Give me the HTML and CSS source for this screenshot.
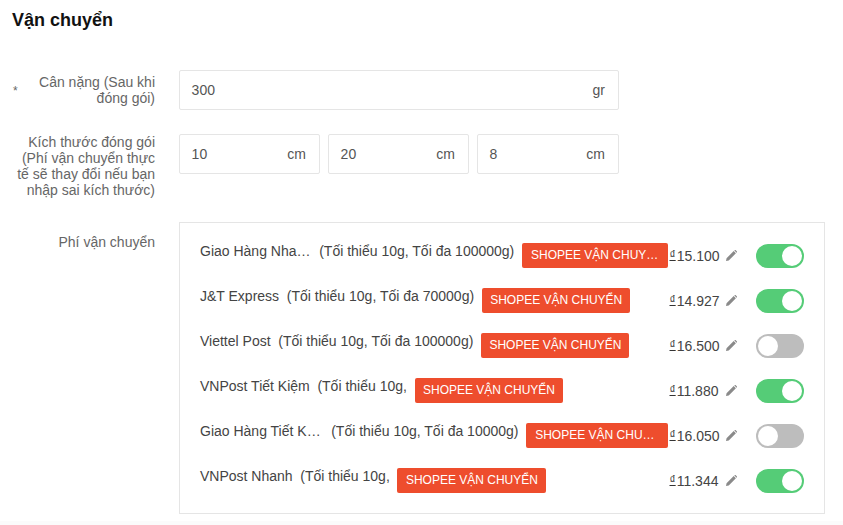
FILE: index.html
```html
<!DOCTYPE html>
<html lang="vi">
<head>
<meta charset="utf-8">
<title>Vận chuyển</title>
<link rel="stylesheet" href="styles.css">
</head>
<body>
<section class="card">
  <h2 class="title">Vận chuyển</h2>
  <div class="form-row form-row--weight">
    <span class="required">*</span>
    <label class="label label--center">Cân nặng (Sau khi đóng gói)</label>
    <div class="fields">
      <div class="input"><span>300</span><span>gr</span></div>
    </div>
  </div>
  <div class="form-row">
    <label class="label">Kích thước đóng gói (Phí vận chuyển thực tế sẽ thay đổi nếu bạn nhập sai kích thước)</label>
    <div class="fields fields--dims">
      <div class="input"><span>10</span><span>cm</span></div>
      <div class="input"><span>20</span><span>cm</span></div>
      <div class="input"><span>8</span><span>cm</span></div>
    </div>
  </div>
  <div class="form-row form-row--last">
    <label class="label label--fee">Phí vận chuyển</label>
    <div class="panel">
      <div class="ship">
        <div class="ship-info"><span class="name name--a">Giao Hàng Nhanh</span><span class="limit">(Tối thiểu 10g, Tối đa 100000g)</span><span class="tag tag--cut">SHOPEE VẬN CHUYỂN</span></div>
        <div class="ship-side"><span class="price"><span class="cur">₫</span>15.100</span><svg class="pencil" viewBox="0 0 12 12"><path d="M0 12l.6-3L8.4 1.2l2.4 2.4L3 11.4zM9.1.5l.5-.5q.4-.3.8 0l1.6 1.6q.3.4 0 .8l-.5.5z"/></svg><span class="switch switch--on"></span></div>
      </div>
      <div class="ship">
        <div class="ship-info"><span class="name">J&amp;T Express</span><span class="limit">(Tối thiểu 10g, Tối đa 70000g)</span><span class="tag">SHOPEE VẬN CHUYỂN</span></div>
        <div class="ship-side"><span class="price"><span class="cur">₫</span>14.927</span><svg class="pencil" viewBox="0 0 12 12"><path d="M0 12l.6-3L8.4 1.2l2.4 2.4L3 11.4zM9.1.5l.5-.5q.4-.3.8 0l1.6 1.6q.3.4 0 .8l-.5.5z"/></svg><span class="switch switch--on"></span></div>
      </div>
      <div class="ship">
        <div class="ship-info"><span class="name">Viettel Post</span><span class="limit">(Tối thiểu 10g, Tối đa 100000g)</span><span class="tag">SHOPEE VẬN CHUYỂN</span></div>
        <div class="ship-side"><span class="price"><span class="cur">₫</span>16.500</span><svg class="pencil" viewBox="0 0 12 12"><path d="M0 12l.6-3L8.4 1.2l2.4 2.4L3 11.4zM9.1.5l.5-.5q.4-.3.8 0l1.6 1.6q.3.4 0 .8l-.5.5z"/></svg><span class="switch"></span></div>
      </div>
      <div class="ship">
        <div class="ship-info"><span class="name">VNPost Tiết Kiệm</span><span class="limit">(Tối thiểu 10g,</span><span class="tag">SHOPEE VẬN CHUYỂN</span></div>
        <div class="ship-side"><span class="price"><span class="cur">₫</span>11.880</span><svg class="pencil" viewBox="0 0 12 12"><path d="M0 12l.6-3L8.4 1.2l2.4 2.4L3 11.4zM9.1.5l.5-.5q.4-.3.8 0l1.6 1.6q.3.4 0 .8l-.5.5z"/></svg><span class="switch switch--on"></span></div>
      </div>
      <div class="ship">
        <div class="ship-info"><span class="name name--b">Giao Hàng Tiết Kiệm</span><span class="limit">(Tối thiểu 10g, Tối đa 10000g)</span><span class="tag tag--cut">SHOPEE VẬN CHUYỂN</span></div>
        <div class="ship-side"><span class="price"><span class="cur">₫</span>16.050</span><svg class="pencil" viewBox="0 0 12 12"><path d="M0 12l.6-3L8.4 1.2l2.4 2.4L3 11.4zM9.1.5l.5-.5q.4-.3.8 0l1.6 1.6q.3.4 0 .8l-.5.5z"/></svg><span class="switch"></span></div>
      </div>
      <div class="ship">
        <div class="ship-info"><span class="name">VNPost Nhanh</span><span class="limit">(Tối thiểu 10g,</span><span class="tag">SHOPEE VẬN CHUYỂN</span></div>
        <div class="ship-side"><span class="price"><span class="cur">₫</span>11.344</span><svg class="pencil" viewBox="0 0 12 12"><path d="M0 12l.6-3L8.4 1.2l2.4 2.4L3 11.4zM9.1.5l.5-.5q.4-.3.8 0l1.6 1.6q.3.4 0 .8l-.5.5z"/></svg><span class="switch switch--on"></span></div>
      </div>
    </div>
  </div>
</section>
</body>
</html>
```
FILE: styles.css
```css
* { box-sizing: border-box; }
html, body { margin: 0; padding: 0; }
body {
  width: 843px;
  height: 525px;
  overflow: hidden;
  background: #fbfbfb;
  font-family: "Liberation Sans", Arial, sans-serif;
  font-size: 14px;
  color: #555;
}
.card {
  background: #fff;
  height: 521px;
  padding: 10px 18px 0 12px;
}
.title {
  margin: 0 0 39px;
  font-size: 18px;
  line-height: 21px;
  font-weight: 700;
  color: #111;
}
.form-row {
  position: relative;
  display: flex;
  gap: 24px;
  margin-bottom: 24px;
}
.form-row--last { margin-bottom: 0; }
.required {
  position: absolute;
  left: 1px;
  top: 13px;
  font-size: 12px;
  line-height: 16px;
  color: #666;
}
.label {
  flex: none;
  width: 143px;
  line-height: 16px;
  text-align: right;
  color: #666;
}
.label--center { padding: 4px 0 0 20px; }
.label--fee { padding-top: 12px; }
.fields {
  display: grid;
  grid-template-columns: 440px;
  gap: 8px;
}
.fields--dims { grid-template-columns: 141px 141px 142px; }
.input {
  height: 40px;
  padding: 0 13px 0 11.6px;
  display: flex;
  align-items: center;
  justify-content: space-between;
  background: #fff;
  border: 1px solid #e5e5e5;
  border-radius: 2px;
  color: #555;
}
.panel {
  width: 646px;
  height: 292px;
  padding: 20px;
  display: flex;
  flex-direction: column;
  gap: 20px;
  border: 1px solid #e5e5e5;
}
.ship {
  display: flex;
  height: 25px;
}
.ship-info {
  flex: 1;
  min-width: 0;
  display: flex;
  gap: 7.7px;
  align-items: flex-start;
  line-height: 16px;
  color: #444;
  white-space: nowrap;
}
.name { flex: none; }
.name--a, .name--b {
  overflow: hidden;
  text-overflow: ellipsis;
}
.name--a { width: 111.5px; }
.name--b { width: 123.5px; }
.limit { flex: none; }
.tag {
  flex: 0 1 auto;
  min-width: 0;
  height: 25px;
  padding: 0 8px 0 8.4px;
  overflow: hidden;
  text-overflow: ellipsis;
  font-size: 12px;
  line-height: 24px;
  color: #fff;
  background: #ee4d2d;
  border-radius: 2px;
}
.tag--cut { padding: 0 9px; }
.ship-side {
  flex: none;
  width: 136px;
  display: flex;
  align-items: center;
}
.price {
  width: 58px;
  padding-left: 1.5px;
  color: #444;
  white-space: nowrap;
}
.cur {
  font-size: 12px;
  color: #333;
  vertical-align: 2px;
  text-decoration: underline;
  margin-right: 1px;
}
.pencil {
  flex: none;
  width: 11px;
  height: 11px;
  fill: #8a8a8a;
}
.switch {
  position: relative;
  margin-left: auto;
  width: 48px;
  height: 24px;
  border-radius: 12px;
  background: #bdbdbd;
}
.switch::after {
  content: "";
  position: absolute;
  top: 2px;
  left: 2px;
  width: 20px;
  height: 20px;
  border-radius: 50%;
  background: #fff;
}
.switch--on { background: #55cc77; }
.switch--on::after { left: 26px; }
```
